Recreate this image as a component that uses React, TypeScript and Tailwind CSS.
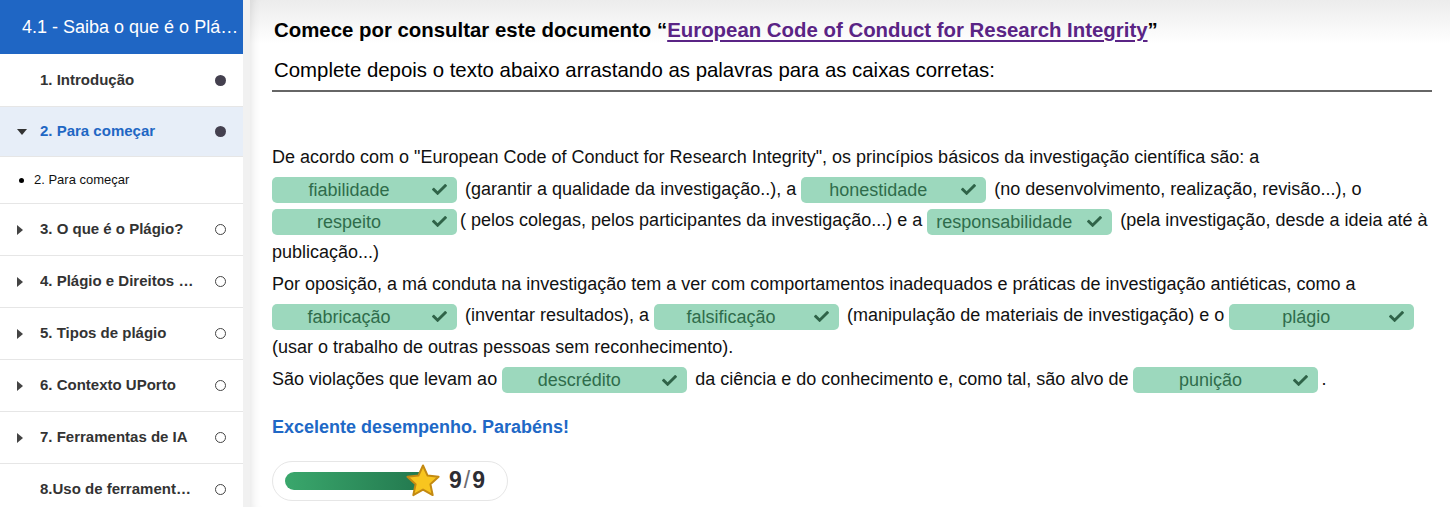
import { FaCheck } from "react-icons/fa";

type NavItem = {
  label: string;
  arrow: "none" | "right" | "down";
  done: boolean;
  active?: boolean;
  h: string;
};

const NAV: NavItem[] = [
  { label: "1. Introdução", arrow: "none", done: true, h: "h-[53px]" },
  { label: "2. Para começar", arrow: "down", done: true, active: true, h: "h-[50px]" },
];

const NAV_REST: NavItem[] = [
  { label: "3. O que é o Plágio?", arrow: "right", done: false, h: "h-[52px]" },
  { label: "4. Plágio e Direitos de Autor", arrow: "right", done: false, h: "h-[52px]" },
  { label: "5. Tipos de plágio", arrow: "right", done: false, h: "h-[52px]" },
  { label: "6. Contexto UPorto", arrow: "right", done: false, h: "h-[52px]" },
  { label: "7. Ferramentas de IA", arrow: "right", done: false, h: "h-[52px]" },
  { label: "8.Uso de ferramentas de IA", arrow: "none", done: false, h: "h-[52px]" },
];

function NavRow({ item }: { item: NavItem }) {
  return (
    <div
      className={`flex ${item.h} items-center border-b border-[#e6e6e6] pl-[17px] pr-[17px] ${
        item.active ? "bg-[#e7eef8] text-[#1f67c4]" : "text-[#333]"
      }`}
    >
      <span className="flex w-[23px] shrink-0 items-center">
        {item.arrow === "right" && (
          <svg width="6" height="10" viewBox="0 0 6 10">
            <path d="M0 0 L6 5 L0 10 Z" fill="#444" />
          </svg>
        )}
        {item.arrow === "down" && (
          <svg width="10" height="6" viewBox="0 0 10 6">
            <path d="M0 0 L10 0 L5 6 Z" fill="#333" />
          </svg>
        )}
      </span>
      <span className="min-w-0 flex-1 truncate pr-[18px] text-[15px] font-bold">{item.label}</span>
      {item.done ? (
        <span className="h-[11px] w-[11px] shrink-0 rounded-full bg-[#44404f]" />
      ) : (
        <span className="h-[11px] w-[11px] shrink-0 rounded-full border-[1.5px] border-[#444]" />
      )}
    </div>
  );
}

function Drop({ word }: { word: string }) {
  return (
    <span className="mr-[3px] inline-flex h-[26px] w-[185px] items-center rounded-[5px] bg-[#9cd8bd] align-middle leading-none text-[#2f6c4b]">
      <span className="flex-1 text-center">{word}</span>
      <FaCheck className="ml-[6px] mr-[10px] h-[15px] w-[15px] text-[#2f6348]" />
    </span>
  );
}

function Line({ children }: { children: React.ReactNode }) {
  return <div className="h-[31.7px] whitespace-nowrap leading-[31.7px]">{children}</div>;
}

function Star() {
  return (
    <svg width="38" height="36" viewBox="0 0 38 36" className="-ml-[17px] shrink-0">
      <path
        d="M19 2.5 L23.6 12.6 L34.6 13.8 L26.4 21.2 L28.7 32.1 L19 26.6 L9.3 32.1 L11.6 21.2 L3.4 13.8 L14.4 12.6 Z"
        fill="#f8c51f"
        stroke="#c48a12"
        strokeWidth="2"
        strokeLinejoin="round"
      />
    </svg>
  );
}

export default function App() {
  return (
    <div
      className="flex h-[507px] w-full overflow-hidden bg-white"
      style={{ fontFamily: '"Liberation Sans", Arial, sans-serif' }}
    >
      {/* sidebar */}
      <aside className="w-[243px] shrink-0 bg-white">
        <div className="flex h-[54px] items-center bg-[#1f66c4] pl-[22px] pr-[2px]">
          <span className="truncate text-[18px] text-white">4.1 - Saiba o que é o Plágio</span>
        </div>
        {NAV.map((n) => (
          <NavRow key={n.label} item={n} />
        ))}
        <div className="flex h-[47px] items-center border-b border-[#e6e6e6] pl-[19px] text-[13px] text-[#111]">
          <span className="mr-[10px] h-[5px] w-[5px] rounded-full bg-black" />
          2. Para começar
        </div>
        {NAV_REST.map((n) => (
          <NavRow key={n.label} item={n} />
        ))}
      </aside>

      {/* divider strip */}
      <div className="w-[7px] shrink-0 bg-[#f1f1f1]" />

      {/* main */}
      <main className="min-w-0 flex-1 bg-[linear-gradient(to_bottom,#ececec_0px,#ffffff_44px)] pl-[22px] pr-[18px] pt-[16px] text-black shadow-[inset_10px_0_10px_-8px_rgba(0,0,0,0.10)]">
        <h2 className="pl-[2px] text-[20.4px] font-bold leading-[28px]">
          Comece por consultar este documento “
          <span className="text-[#5a2485] underline underline-offset-[3px]">
            European Code of Conduct for Research Integrity
          </span>
          ”
        </h2>
        <p className="mt-[12px] pl-[2px] text-[20.4px] leading-[28px]">
          Complete depois o texto abaixo arrastando as palavras para as caixas corretas:
        </p>
        <div className="mt-[6px] h-[2px] bg-[#666]" />

        <div className="mt-[50px] text-[18px] text-[#111]">
          <Line>
            De acordo com o "European Code of Conduct for Research Integrity", os princípios básicos da
            investigação científica são: a
          </Line>
          <Line>
            <Drop word="fiabilidade" /> (garantir a qualidade da investigação..), a <Drop word="honestidade" /> (no
            desenvolvimento, realização, revisão...), o
          </Line>
          <Line>
            <Drop word="respeito" />( pelos colegas, pelos participantes da investigação...) e a{" "}
            <Drop word="responsabilidade" /> (pela investigação, desde a ideia até à
          </Line>
          <Line>publicação...)</Line>
          <Line>
            Por oposição, a má conduta na investigação tem a ver com comportamentos inadequados e práticas de
            investigação antiéticas, como a
          </Line>
          <Line>
            <Drop word="fabricação" /> (inventar resultados), a <Drop word="falsificação" /> (manipulação de
            materiais de investigação) e o <Drop word="plágio" />
          </Line>
          <Line>(usar o trabalho de outras pessoas sem reconhecimento).</Line>
          <Line>
            São violações que levam ao <Drop word="descrédito" /> da ciência e do conhecimento e, como tal, são
            alvo de <Drop word="punição" />.
          </Line>
        </div>

        <p className="mt-[18px] text-[18px] font-bold text-[#2068c6]">Excelente desempenho. Parabéns!</p>

        <div className="mt-[20px] inline-flex h-[40px] w-[236px] items-center rounded-full border border-[#e6e6e6] bg-white pl-[12px]">
          <div className="h-[18px] w-[136px] rounded-l-full bg-[linear-gradient(to_right,#3aa76c,#23794f)]" />
          <Star />
          <span className="ml-[7px] text-[23px] font-bold text-[#2d2d33]">
            9<span className="mx-[2px] font-normal text-[#6b6b70]">/</span>9
          </span>
        </div>
      </main>
    </div>
  );
}
